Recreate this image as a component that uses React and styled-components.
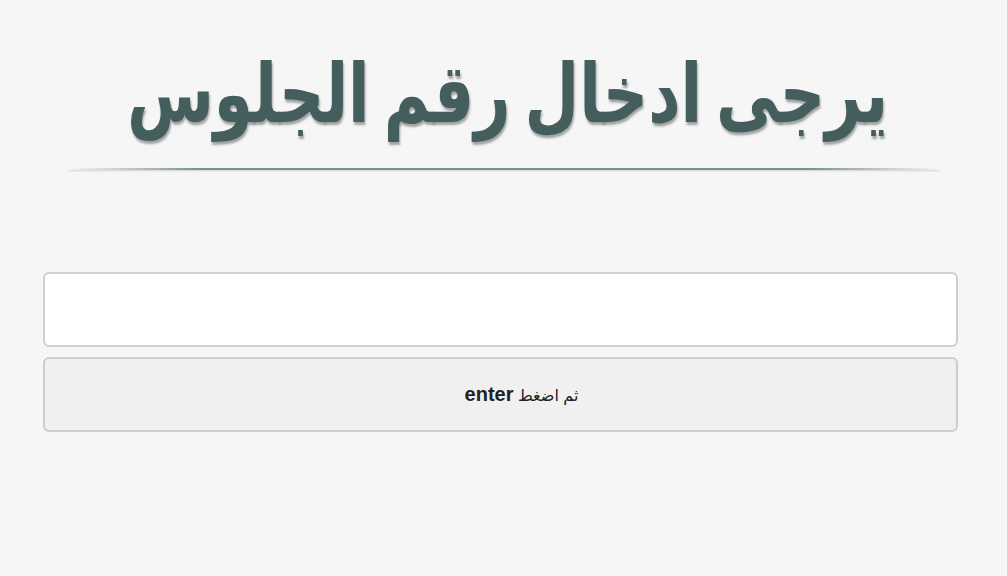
import React from "react";
import styled, { createGlobalStyle } from "styled-components";

const GlobalStyle = createGlobalStyle`
  html, body {
    margin: 0;
    padding: 0;
    background: #f6f6f6;
  }
  body {
    font-family: "DejaVu Sans", "Liberation Sans", sans-serif;
  }
`;

const Page = styled.div`
  width: 1007px;
  height: 576px;
  box-sizing: border-box;
  padding: 44px 49px 0 43px;
  display: flex;
  flex-direction: column;
  background: #f6f6f6;
  overflow: hidden;
`;

const Header = styled.div`
  display: flex;
  flex-direction: column;
  align-items: center;
`;

const Title = styled.h1`
  margin: 0 0 0 14px;
  height: 110px;
  direction: rtl;
  white-space: nowrap;
  font-family: "DejaVu Sans", sans-serif;
  font-weight: bold;
  font-size: 63px;
  line-height: 104px;
  word-spacing: -8px;
  color: #435e5d;
  text-shadow: 1px 2px 2px rgba(0, 0, 0, 0.35);
  transform: scaleY(1.3);
`;

const Divider = styled.div`
  width: 870px;
  height: 2px;
  margin: 14px 0 0 6px;
  background: linear-gradient(
    to right,
    rgba(120, 140, 140, 0),
    #7a9090 15%,
    #7a9090 85%,
    rgba(120, 140, 140, 0)
  );
  box-shadow: 0 1px 2px rgba(0, 0, 0, 0.15);
`;

const Form = styled.form`
  margin-top: 102px;
  display: flex;
  flex-direction: column;
  gap: 10px;
`;

const Field = styled.input`
  height: 75px;
  box-sizing: border-box;
  border: 2px solid #cfcfcf;
  border-radius: 6px;
  background: #fff;
  font-size: 20px;
  padding: 0 12px;
  outline: none;
  direction: rtl;
`;

const Submit = styled.button`
  height: 75px;
  box-sizing: border-box;
  border: 2px solid #cdcdcd;
  border-radius: 6px;
  background: #f0f0f0;
  font-family: "Liberation Sans", "DejaVu Sans", sans-serif;
  font-size: 16px;
  color: #222;
  cursor: pointer;
  direction: rtl;
  padding-left: 48px;
`;

const Key = styled.b`
  font-size: 20px;
  font-weight: bold;
`;

export default function App() {
  return (
    <>
      <GlobalStyle />
      <Page>
        <Header>
          <Title>يرجى ادخال رقم الجلوس</Title>
          <Divider />
        </Header>
        <Form onSubmit={(e) => e.preventDefault()}>
          <Field type="text" />
          <Submit type="submit">
            ثم اضغط <Key>enter</Key>
          </Submit>
        </Form>
      </Page>
    </>
  );
}
